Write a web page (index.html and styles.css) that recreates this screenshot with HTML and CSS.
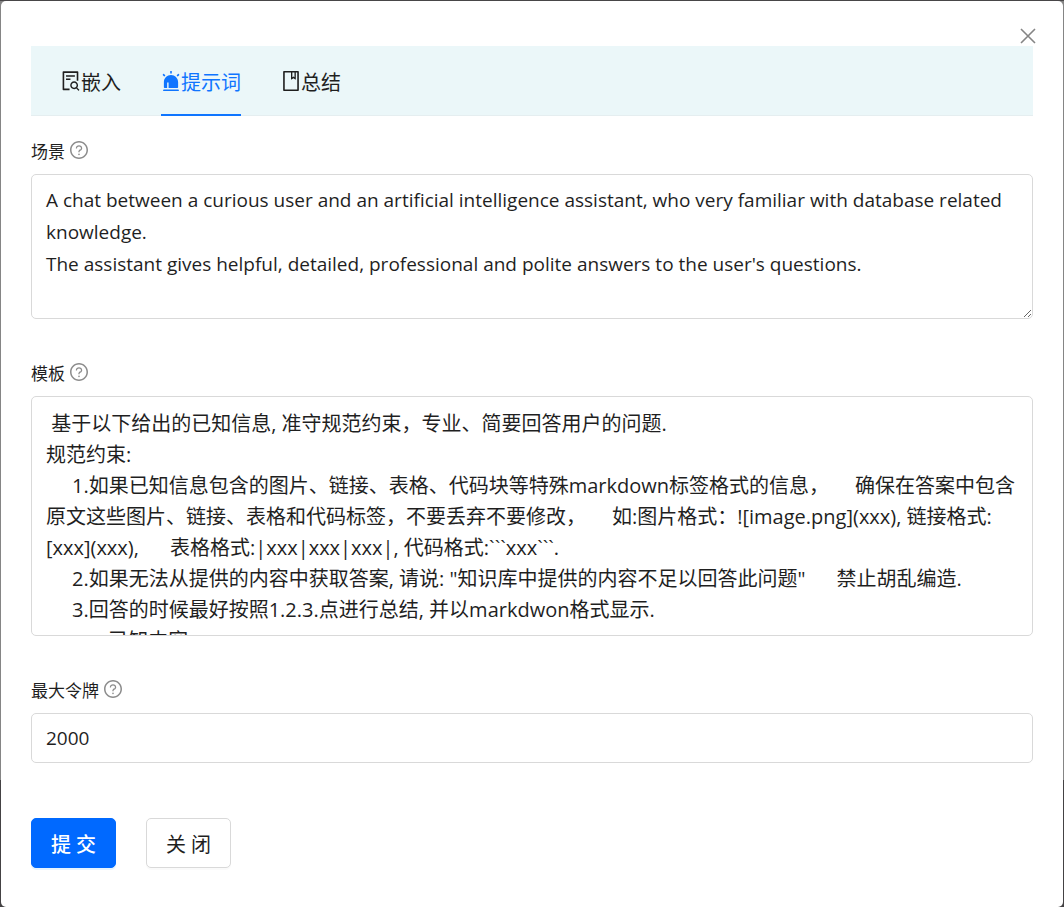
FILE: index.html
```html
<!DOCTYPE html>
<html lang="zh-CN">
<head>
<meta charset="utf-8">
<meta name="viewport" content="width=device-width, initial-scale=1">
<title>提示词</title>
<link rel="stylesheet" href="styles.css">
</head>
<body>
<svg class="sprite" aria-hidden="true">
  <symbol id="icon-help" viewBox="64 64 896 896">
    <path d="M512 64C264.600 64 64 264.600 64 512s200.600 448 448 448 448-200.600 448-448S759.400 64 512 64zm0 820c-205.400 0-372-166.600-372-372s166.600-372 372-372 372 166.600 372 372-166.600 372-372 372z"/>
    <path d="M623.600 316.700C593.600 290.400 554 276 512 276s-81.600 14.500-111.600 40.700C369.200 344 352 380.700 352 420v7.600c0 4.400 3.600 8 8 8h48c4.400 0 8-3.600 8-8V420c0-44.100 43.100-80 96-80s96 35.900 96 80c0 31.100-22 59.600-56.100 72.700-21.200 8.100-39.200 22.300-52.100 40.900-13.100 19-19.900 41.800-19.900 64.900V620c0 4.400 3.600 8 8 8h48c4.400 0 8-3.600 8-8v-22.700a48.300 48.300 0 0 1 30.900-44.800c59-22.700 97.100-74.700 97.100-132.500.1-39.300-17.100-76-48.300-103.300zM472 732a40 40 0 1 0 80 0 40 40 0 1 0-80 0z"/>
  </symbol>
</svg>
<main class="modal" role="dialog" aria-label="提示词">
  <button class="close" type="button" aria-label="关闭窗口">
    <svg viewBox="0 0 16 16"><path d="M1 1L15 15M15 1L1 15"/></svg>
  </button>
  <div class="tabs" role="tablist">
    <button class="tab" type="button" role="tab" aria-selected="false">
      <svg class="icon" viewBox="64 64 896 896"><path d="M688 312v-48c0-4.400-3.600-8-8-8H296c-4.400 0-8 3.600-8 8v48c0 4.400 3.600 8 8 8h384c4.400 0 8-3.600 8-8zm-392 88c-4.400 0-8 3.600-8 8v48c0 4.400 3.600 8 8 8h184c4.400 0 8-3.600 8-8v-48c0-4.400-3.600-8-8-8H296zm144 452H208V148h560v344c0 4.400 3.600 8 8 8h56c4.400 0 8-3.600 8-8V108c0-17.700-14.300-32-32-32H168c-17.700 0-32 14.300-32 32v784c0 17.700 14.300 32 32 32h272c4.400 0 8-3.600 8-8v-56c0-4.400-3.600-8-8-8zm445.700 51.500l-93.300-93.300C814.700 780.700 828 743.900 828 704c0-97.200-78.800-176-176-176s-176 78.800-176 176 78.800 176 176 176c35.800 0 69-10.700 96.800-29l94.700 94.700c1.600 1.600 3.600 2.300 5.600 2.300s4.100-.8 5.600-2.300l31-31a7.900 7.900 0 0 0 0-11.200zM652 816c-61.900 0-112-50.100-112-112s50.100-112 112-112 112 50.100 112 112-50.100 112-112 112z"/></svg>
      <span>嵌入</span>
    </button>
    <button class="tab tab-active" type="button" role="tab" aria-selected="true">
      <svg class="icon" viewBox="64 64 896 896"><path fill-rule="evenodd" d="M512 244c176.180 0 319 142.820 319 319v233a32 32 0 0 1-32 32H225a32 32 0 0 1-32-32V563c0-176.180 142.820-319 319-319zM484 68h56a8 8 0 0 1 8 8v96a8 8 0 0 1-8 8h-56a8 8 0 0 1-8-8V76a8 8 0 0 1 8-8zM177.250 191.660a8 8 0 0 1 11.320 0l67.880 67.880a8 8 0 0 1 0 11.310l-39.600 39.600a8 8 0 0 1-11.310 0l-67.880-67.880a8 8 0 0 1 0-11.310l39.600-39.600zM846.850 191.660l39.600 39.600a8 8 0 0 1 0 11.300l-67.880 67.900a8 8 0 0 1-11.320 0l-39.600-39.600a8 8 0 0 1 0-11.320l67.890-67.880a8 8 0 0 1 11.310 0zM192 892h640a32 32 0 0 1 32 32v24a8 8 0 0 1-8 8H168a8 8 0 0 1-8-8v-24a32 32 0 0 1 32-32zM340 575v253h64V575z"/></svg>
      <span>提示词</span>
    </button>
    <button class="tab" type="button" role="tab" aria-selected="false">
      <svg class="icon" viewBox="64 64 896 896"><path d="M832 64H192c-17.700 0-32 14.300-32 32v832c0 17.700 14.300 32 32 32h640c17.700 0 32-14.300 32-32V96c0-17.700-14.300-32-32-32zm-260 72h96v209.900L621.500 312 572 347.400V136zm220 752H232V136h280v296.900c0 3.300 1 6.600 3 9.300a15.900 15.900 0 0 0 22.300 3.700l83.800-59.900 81.400 59.400c2.700 2 6 3.100 9.400 3.100 8.800 0 16-7.200 16-16V136h64v752z"/></svg>
      <span>总结</span>
    </button>
  </div>
  <form class="form">
    <div class="field">
      <div class="field-label">
        <label for="scene">场景</label>
        <svg class="help"><use href="#icon-help"/></svg>
      </div>
      <textarea class="control scene" id="scene">A chat between a curious user and an artificial intelligence assistant, who very familiar with database related knowledge.
The assistant gives helpful, detailed, professional and polite answers to the user's questions.</textarea>
    </div>
    <div class="field">
      <div class="field-label">
        <label for="template">模板</label>
        <svg class="help"><use href="#icon-help"/></svg>
      </div>
      <textarea class="control template" id="template"> 基于以下给出的已知信息, 准守规范约束，专业、简要回答用户的问题.
规范约束:
     1.如果已知信息包含的图片、链接、表格、代码块等特殊markdown标签格式的信息，     确保在答案中包含原文这些图片、链接、表格和代码标签，不要丢弃不要修改，     如:图片格式：![image.png](xxx), 链接格式:[xxx](xxx),      表格格式:|xxx|xxx|xxx|, 代码格式:```xxx```.
     2.如果无法从提供的内容中获取答案, 请说: "知识库中提供的内容不足以回答此问题"      禁止胡乱编造.
     3.回答的时候最好按照1.2.3.点进行总结, 并以markdwon格式显示.
            已知内容:</textarea>
    </div>
    <div class="field">
      <div class="field-label">
        <label for="tokens">最大令牌</label>
        <svg class="help"><use href="#icon-help"/></svg>
      </div>
      <input class="control tokens" id="tokens" type="text" value="2000">
    </div>
    <div class="actions">
      <button class="btn btn-primary" type="button">提 交</button>
      <button class="btn" type="button">关 闭</button>
    </div>
  </form>
</main>
</body>
</html>
```

FILE: styles.css
```css
* {
  box-sizing: border-box;
}

body {
  margin: 0;
  min-height: 100vh;
  display: flex;
  padding: 1px 1px 0;
  background: linear-gradient(#484648 1px, #858585 1px, #858585 86%, #444244 86%);
  color: #1f1f1f;
  font-family: "Open Sans", "Noto Sans CJK SC", sans-serif;
  font-size: 20px;
}

button,
input,
textarea {
  font: inherit;
  color: inherit;
}

.sprite {
  display: none;
}

.modal {
  position: relative;
  flex: 1;
  min-width: 0;
  padding: 45px 30px 38px;
  border-radius: 5px;
  background: #fff;
}

.close {
  position: absolute;
  top: 23px;
  right: 23px;
  width: 24px;
  height: 24px;
  padding: 4px;
  border: 0;
  background: none;
}

.close svg {
  display: block;
  width: 16px;
  height: 16px;
  fill: none;
  stroke: #858585;
  stroke-width: 1.6;
}

.tabs {
  display: flex;
  gap: 40px;
  height: 70px;
  padding: 0 30px;
  background: #ebf7f9;
  box-shadow: inset 0 -1px #e5eef0;
}

.tab {
  display: flex;
  align-items: center;
  padding: 2px 0 0;
  border: 0;
  border-bottom: 2px solid transparent;
  background: none;
  font-family: "Noto Sans CJK SC", sans-serif;
}

.tab-active {
  border-bottom-color: #0f75ff;
  color: #0f75ff;
}

.icon {
  width: 20px;
  height: 20px;
  fill: currentColor;
}

.form {
  display: flex;
  flex-direction: column;
  gap: 40px;
  padding-top: 21px;
}

.field {
  display: flex;
  flex-direction: column;
  gap: 11px;
}

.field-label {
  display: flex;
  align-items: center;
  gap: 5px;
  height: 26px;
  font-family: "Noto Sans CJK SC", sans-serif;
  font-size: 17px;
}

.help {
  width: 18px;
  height: 18px;
  fill: #8c8c8c;
}

.control {
  display: block;
  width: 100%;
  margin: 0;
  padding: 9px 14px;
  border: 1px solid #d9d9d9;
  border-radius: 5px;
  outline: 0;
  background: #fff;
  line-height: 31px;
}

.scene {
  height: 145px;
  font-size: 19px;
  line-height: 32px;
  resize: vertical;
}

.template {
  height: 240px;
  padding-top: 11px;
  overflow: hidden;
  resize: none;
}

.tokens {
  height: 50px;
  font-size: 19px;
}

.actions {
  display: flex;
  gap: 30px;
  padding-top: 15px;
}

.btn {
  width: 85px;
  height: 50px;
  padding: 0;
  border: 1px solid #d9d9d9;
  border-radius: 5px;
  background: #fff;
  box-shadow: 0 2px 0 rgba(0, 0, 0, 0.02);
}

.btn-primary {
  border-color: #0069ff;
  background: #0069ff;
  box-shadow: 0 2px 0 rgba(5, 145, 255, 0.1);
  color: #fff;
  font-weight: 500;
}
```
